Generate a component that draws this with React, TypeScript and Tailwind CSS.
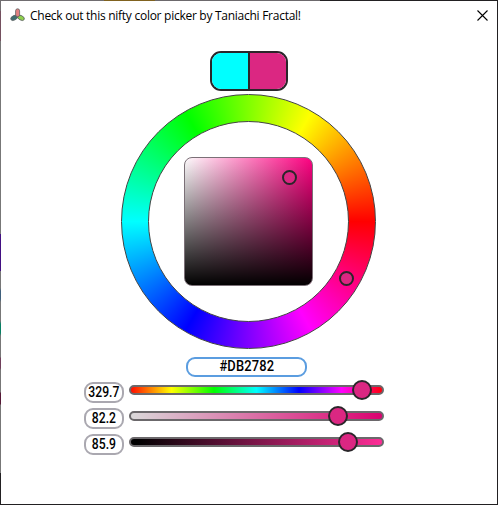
import React from "react";

const WHEEL =
  "bg-[conic-gradient(from_90deg,#f00,#f0f,#00f,#0ff,#0f0,#ff0,#f00)]";

type Channel = { value: string; track: string; knob: string };

const channels: Channel[] = [
  {
    value: "329.7",
    track: "bg-[linear-gradient(to_right,#f00,#ff0,#0f0,#0ff,#00f,#f0f,#f00)]",
    knob: "left-[221px]",
  },
  {
    value: "82.2",
    track: "bg-[linear-gradient(to_right,#dbdbdb,#db006f)]",
    knob: "left-[197px]",
  },
  {
    value: "85.9",
    track: "bg-[linear-gradient(to_right,#000_3%,#ff2d97)]",
    knob: "left-[207px]",
  },
];

function AppIcon() {
  return (
    <svg width="16" height="16" viewBox="0 0 16 16" className="shrink-0">
      <g stroke="#5d6263" strokeWidth="0.8">
        <ellipse cx="4.2" cy="9.8" rx="3.7" ry="2.2" transform="rotate(-28 4.2 9.8)" fill="#3f6e70" />
        <ellipse cx="10.9" cy="9.8" rx="3.7" ry="2.2" transform="rotate(28 10.9 9.8)" fill="#8fd14c" />
        <rect x="5.6" y="0.8" width="4" height="8" rx="2" fill="#e28080" />
      </g>
    </svg>
  );
}

function TitleBar() {
  return (
    <header className="flex h-[29px] items-center pl-[9px] pr-[9px]">
      <AppIcon />
      <h1 className="ml-[4px] w-[290px] whitespace-nowrap font-['Open_Sans','Noto_Sans',sans-serif] text-[12px] leading-[18px] tracking-[-0.27px] text-black">
        Check out this nifty color picker by Taniachi Fractal!
      </h1>
      <svg width="11" height="11" viewBox="0 0 11 11" className="ml-auto" stroke="#000" strokeWidth="1.1">
        <path d="M.5 .5l10 10M10.5 .5l-10 10" />
      </svg>
    </header>
  );
}

function Wheel() {
  return (
    <div className={`relative mt-[3px] flex size-[255px] items-center justify-center rounded-full border border-[#444] ${WHEEL} bg-origin-border`}>
      <div className="flex size-[201px] items-center justify-center rounded-full border border-[#444] bg-white">
        <div className="relative size-[129px] rounded-[8px] border border-[#7b7077] bg-[linear-gradient(to_top,#000,transparent),linear-gradient(to_right,#fff,#ff0081)] bg-origin-border">
          <span className="absolute left-[97px] top-[12px] size-[15px] rounded-full border-2 border-[#2a262a] bg-[#db2782]" />
        </div>
      </div>
      <span className="absolute left-[217px] top-[176px] size-[15px] rounded-full border-2 border-[#2a262a] bg-[#db2782]" />
    </div>
  );
}

function ChannelRow({ value, track, knob }: Channel) {
  return (
    <div className="flex h-[21px]">
      <div className="flex h-[21px] w-[40px] items-center justify-center rounded-[9px] border-2 border-[#aaa8b0] pb-[2px] text-[14px] font-medium leading-none">
        <span className="scale-x-[0.87]">{value}</span>
      </div>
      <div className={`relative ml-[5px] mt-[3px] h-[10px] w-[255px] rounded-full border-2 border-[#6b686b] bg-origin-border ${track}`}>
        <span className={`absolute -top-[7px] size-5 rounded-full border-2 border-[#2a262a] bg-[#db2782] ${knob}`} />
      </div>
    </div>
  );
}

export default function App() {
  return (
    <div className="flex h-[505px] w-[498px] flex-col bg-[#222022] font-['Roboto','Liberation_Sans',sans-serif] text-black">
      <div className="h-px shrink-0 bg-[linear-gradient(to_right,#706d70_104px,#80621f_104px,#80621f_155px,#6c696c_155px,#6c696c_320px,#222022_320px)]" />
      <div className="flex flex-1">
        <div className="w-px shrink-0 bg-[linear-gradient(to_bottom,#706d70_10px,#74505f_10px,#74505f_40px,#777_40px,#777_233px,#421082_233px,#421082_270px,#777_270px,#777_287px,#3f607c_290px,#3f607c_298px,#777_301px,#777_320px,#078064_323px,#078064_332px,#777_335px,#777_356px,#703f5b_357px,#703f5b_367px,#777_369px,#777_391px,#551936_392px,#551936_403px,#777_404px,#777_472px,#222022_472px)]" />
        <div className="flex w-[496px] flex-col bg-white">
          <TitleBar />
          <main className="ml-[83px] flex w-[300px] flex-col">
            <div className="ml-[37.4px] flex w-[255px] flex-col items-center">
              <div className="ml-px mt-[21px] flex h-10 w-[78px] overflow-hidden rounded-[11px] border-2 border-[#2a262a]">
                <div className="w-[38px] border-r-2 border-[#2a262a] bg-[#0ff]" />
                <div className="flex-1 bg-[#db2782]" />
              </div>
              <Wheel />
            </div>
            <div className="ml-[102px] mt-2 flex h-5 w-[121px] items-center justify-center rounded-[9px] border-2 border-[#5b9de0] pb-[2px] text-[14px] font-medium leading-none tracking-[0.2px]">
              <span className="scale-x-[0.92]">#DB2782</span>
            </div>
            <div className="mt-[5px] flex flex-col gap-[5px]">
              {channels.map((c) => (
                <ChannelRow key={c.value} {...c} />
              ))}
            </div>
          </main>
        </div>
      </div>
      <div className="h-px shrink-0 bg-[#222022]" />
    </div>
  );
}
